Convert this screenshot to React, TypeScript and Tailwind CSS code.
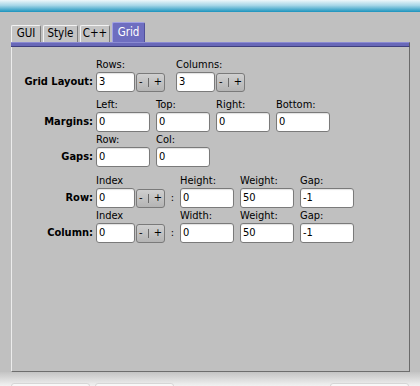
import React from "react";

const font = "font-['DejaVu_Sans_Condensed','DejaVu_Sans',sans-serif] font-stretch-condensed";

function Field({ value, w = "w-[54px]" }: { value: string; w?: string }) {
  return (
    <div
      className={`${w} flex h-[20px] items-center rounded-[3px] border border-[#7a7a7a] bg-white pl-[2px] shadow-[inset_0_1px_1px_rgba(0,0,0,0.12)]`}
    >
      {value}
    </div>
  );
}

function Stepper() {
  return (
    <div className="ml-[1px] flex h-[19px] w-[29px] items-center justify-center gap-[5px] rounded-[3px] border border-[#7a7a7a] bg-[linear-gradient(to_bottom,#cfcfcf,#b4b4b4)]">
      <span>-</span>
      <span className="h-[9px] w-px bg-[#6a6a6a]" />
      <span>+</span>
    </div>
  );
}

function Cap({ children }: { children?: React.ReactNode }) {
  return <div className="flex h-[15px] items-end pb-[1px] leading-[13px]">{children}</div>;
}

function Col({ label, children, className = "" }: { label: string; children: React.ReactNode; className?: string }) {
  return (
    <div className={`flex flex-col ${className}`}>
      <Cap>{label}</Cap>
      <div className="flex items-center">{children}</div>
    </div>
  );
}

function Block({ title, children, className = "" }: { title: string; children: React.ReactNode; className?: string }) {
  return (
    <div className={`flex ${className}`}>
      <div className="flex w-[81px] flex-col">
        <Cap />
        <div className="flex h-[20px] items-center justify-end font-bold">{title}</div>
      </div>
      <div className="ml-[3px] flex">{children}</div>
    </div>
  );
}

function Tab({ label, w, active }: { label: string; w: string; active?: boolean }) {
  if (active) {
    return (
      <div
        className={`${w} flex h-[20px] items-center justify-center rounded-t-[2px] border-t border-l border-r border-t-[#a0a0e4] border-l-[#a0a0e4] border-r-[#50509a] bg-[#6e6ec0] text-[11.5px] text-white`}
      >
        {label}
      </div>
    );
  }
  return (
    <div
      className={`${w} flex h-[17px] items-center justify-center rounded-t-[2px] border-t border-l border-r border-t-[#f2f2f2] border-l-[#f2f2f2] border-r-[#7c7c7c] bg-[#c4c4c4] text-[11.5px]`}
    >
      {label}
    </div>
  );
}

export default function App() {
  return (
    <div className={`h-[386px] w-[420px] overflow-hidden bg-[#c0c0c0] text-[11px] text-black ${font}`}>
      <div className="h-[12px] bg-[linear-gradient(to_bottom,#eef7fa,#a6d6e8_45%,#1b93bd)]" />

      <div className="ml-[11px] mt-[10px] flex h-[20px] items-end gap-[2px]">
        <Tab label="GUI" w="w-[30px]" />
        <Tab label="Style" w="w-[35px]" />
        <Tab label="C++" w="w-[30px]" />
        <Tab label="Grid" w="w-[33px]" active />
      </div>

      <div className="ml-[11px] h-[5px] w-[399px] border-t border-b border-r border-t-[#8a8ad2] border-b-[#3e3e7e] border-r-[#5a5a5a] bg-[#6868b8]" />

      <div className="ml-[11px] h-[325px] w-[399px] border-l border-r border-b border-l-[#ececec] border-r-[#6a6a6a] border-b-[#6e6e6e] pt-[10px]">
        <Block title="Grid Layout:">
          <Col label="Rows:">
            <Field value="3" w="w-[39px]" />
            <Stepper />
          </Col>
          <Col label="Columns:" className="ml-[11px]">
            <Field value="3" w="w-[39px]" />
            <Stepper />
          </Col>
        </Block>

        <Block title="Margins:" className="mt-[5px]">
          <div className="flex gap-[6px]">
            <Col label="Left:"><Field value="0" /></Col>
            <Col label="Top:"><Field value="0" /></Col>
            <Col label="Right:"><Field value="0" /></Col>
            <Col label="Bottom:"><Field value="0" /></Col>
          </div>
        </Block>

        <Block title="Gaps:">
          <div className="flex gap-[6px]">
            <Col label="Row:"><Field value="0" /></Col>
            <Col label="Col:"><Field value="0" /></Col>
          </div>
        </Block>

        <Block title="Row:" className="mt-[6px]">
          <Col label="Index">
            <Field value="0" w="w-[39px]" />
            <Stepper />
            <span className="flex w-[15px] justify-center">:</span>
          </Col>
          <div className="flex gap-[6px]">
            <Col label="Height:"><Field value="0" /></Col>
            <Col label="Weight:"><Field value="50" /></Col>
            <Col label="Gap:"><Field value="-1" /></Col>
          </div>
        </Block>

        <Block title="Column:">
          <Col label="Index">
            <Field value="0" w="w-[39px]" />
            <Stepper />
            <span className="flex w-[15px] justify-center">:</span>
          </Col>
          <div className="flex gap-[6px]">
            <Col label="Width:"><Field value="0" /></Col>
            <Col label="Weight:"><Field value="50" /></Col>
            <Col label="Gap:"><Field value="-1" /></Col>
          </div>
        </Block>
      </div>

      <div className="flex h-[14px] bg-[linear-gradient(to_bottom,#c4c4c4,#f2f2f2)] pt-[11px]">
        <div className="ml-[11px] h-[6px] w-[79px] rounded-t-[3px] border border-[#d6d6d6] bg-[#f8f8f8]" />
        <div className="ml-[5px] h-[6px] w-[79px] rounded-t-[3px] border border-[#d6d6d6] bg-[#f8f8f8]" />
        <div className="ml-auto mr-[11px] h-[6px] w-[79px] rounded-t-[3px] border border-[#d6d6d6] bg-[#f8f8f8]" />
      </div>
    </div>
  );
}
